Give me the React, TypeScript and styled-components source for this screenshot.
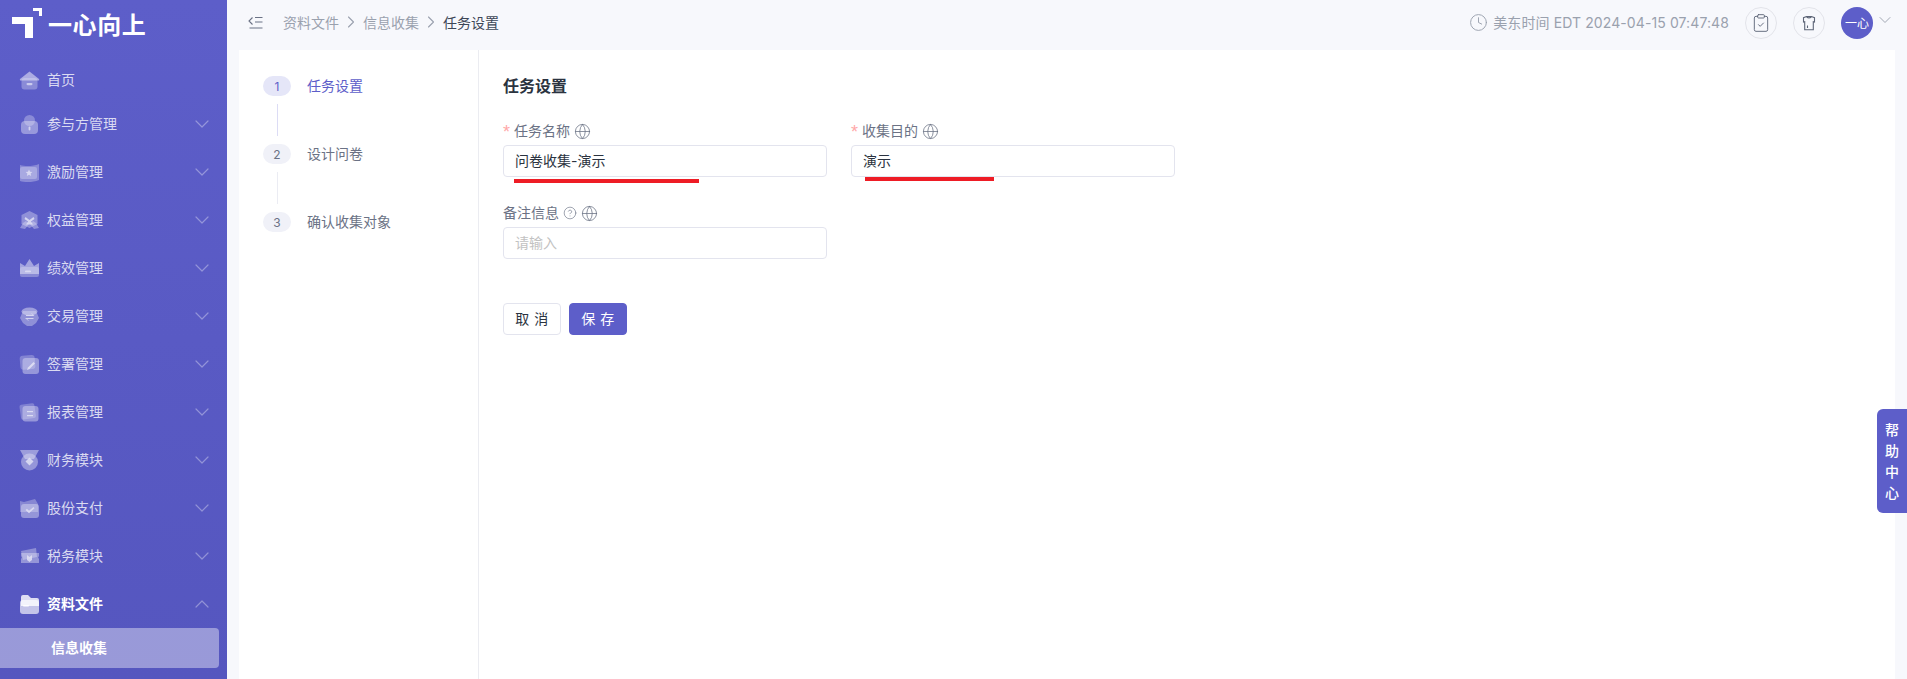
import React from "react";
import styled, { createGlobalStyle } from "styled-components";
import { ChevronDown, ChevronRight, ChevronUp, CircleHelp, ClipboardCheck, Clock, Globe } from "lucide-react";

const GlobalStyle = createGlobalStyle`
  html, body {
    margin: 0;
    height: 100%;
    overflow: hidden;
  }
  body {
    font-family: Inter, "Noto Sans CJK SC", sans-serif;
    font-size: 14px;
    color: #2b3340;
    background: #f7f8fc;
  }
  * {
    box-sizing: border-box;
  }
`;

const Page = styled.div`
  display: flex;
  width: 100%;
  height: 679px;
  overflow: hidden;
  position: relative;
`;

const Sidebar = styled.aside`
  flex: 0 0 227px;
  height: 100%;
  background: linear-gradient(180deg, #5d5ec9 0%, #5556bf 100%);
  color: #fff;
  overflow: hidden;
`;

const LogoRow = styled.div`
  display: flex;
  align-items: center;
  height: 46px;
  padding: 0 0 0 12px;
  gap: 6px;
`;

const LogoText = styled.span`
  font-size: 24px;
  line-height: 46px;
  font-weight: 700;
  letter-spacing: 0.6px;
  color: #fff;
  margin-top: 6px;
`;

const Menu = styled.nav`
  display: flex;
  flex-direction: column;
  gap: 8px;
  padding-top: 14px;
`;

const MenuRow = styled.div<{ $open?: boolean }>`
  display: flex;
  align-items: center;
  height: 40px;
  padding: 0 13px 0 19px;
  gap: 7px;
  color: ${(p) => (p.$open ? "#fff" : "rgba(255, 255, 255, 0.78)")};
  font-weight: ${(p) => (p.$open ? 600 : 400)};

  svg.arrow {
    margin-left: auto;
    color: rgba(255, 255, 255, 0.35);
  }
`;

const MenuFirst = styled(MenuRow)`
  margin-bottom: -4px;
`;

const MenuText = styled.span`
  margin-bottom: 2px;
`;

const SubRow = styled.div`
  display: flex;
  align-items: center;
  height: 40px;
  width: 219px;
  margin-top: -4px;
  padding: 0 0 2px 51px;
  border-radius: 0 4px 4px 0;
  background: rgba(255, 255, 255, 0.4);
  color: #fff;
  font-weight: 600;
`;

const Main = styled.div`
  flex: 1;
  min-width: 0;
  display: flex;
  flex-direction: column;
`;

const Header = styled.header`
  flex: 0 0 50px;
  display: flex;
  align-items: center;
  padding: 0 12px 5px 21px;
  background: #f7f8fc;
`;

const Crumbs = styled.div`
  display: flex;
  align-items: center;
  margin: 0 0 2px 19px;
  color: #9aa1ae;
`;

const CrumbSep = styled.span`
  display: flex;
  width: 24px;
  justify-content: center;
  color: #9aa1ae;
`;

const CrumbCurrent = styled.span`
  color: #3d4757;
`;

const HeaderRight = styled.div`
  margin-left: auto;
  display: flex;
  align-items: center;
  color: #9aa1ae;
`;

const TimeText = styled.span`
  margin: 0 16px 2px 5px;
  white-space: nowrap;
  font-size: 14px;
  letter-spacing: 0.1px;
`;

const RoundButton = styled.span`
  width: 32px;
  height: 32px;
  margin-right: 16px;
  display: flex;
  align-items: center;
  justify-content: center;
  border: 1px solid #e3e4ea;
  border-radius: 50%;
  color: #5d6577;
`;

const Avatar = styled.span`
  width: 32px;
  height: 32px;
  display: flex;
  align-items: center;
  justify-content: center;
  border-radius: 50%;
  background: #5d5ec9;
  color: #fff;
  font-size: 12px;
  white-space: nowrap;
`;

const AvatarArrow = styled(ChevronDown)`
  margin-left: 2px;
  margin-top: -6px;
  color: #a2a8b4;
`;

const Body = styled.div`
  flex: 1;
  display: flex;
  margin: 0 12px;
  background: #fff;
  min-height: 0;
`;

const Steps = styled.div`
  flex: 0 0 240px;
  padding: 26px 0 0 24px;
  border-right: 1px solid #ebecf1;
`;

const Step = styled.div`
  display: flex;
  align-items: center;
  height: 20px;
  gap: 16px;
`;

const StepNumber = styled.span<{ $active?: boolean }>`
  width: 28px;
  height: 20px;
  display: flex;
  align-items: center;
  justify-content: center;
  border-radius: 10px;
  font-size: 12px;
  background: ${(p) => (p.$active ? "#e5e6f8" : "#f0f1f8")};
  color: ${(p) => (p.$active ? "#5d5ec9" : "#6b7285")};
`;

const StepLabel = styled.span<{ $active?: boolean }>`
  margin-bottom: 2px;
  color: ${(p) => (p.$active ? "#5d5ec9" : "#6b7285")};
`;

const StepLine = styled.div<{ $active?: boolean }>`
  width: 1px;
  height: 32px;
  margin: 8px 0 8px 14px;
  background: ${(p) => (p.$active ? "#dcdcf5" : "#ebecf3")};
`;

const FormArea = styled.div`
  flex: 1;
  padding: 25px 24px 0 24px;
`;

const Title = styled.h2`
  margin: 0;
  font-size: 16px;
  line-height: 22px;
  font-weight: 600;
  color: #2b3340;
`;

const FormRow = styled.div`
  display: flex;
  gap: 24px;
  margin-top: 23px;
`;

const FormRowNext = styled(FormRow)`
  margin-top: 25px;
`;

const Field = styled.div`
  position: relative;
  width: 324px;
`;

const Label = styled.label`
  display: flex;
  align-items: center;
  height: 22px;
  margin-bottom: 3px;
  padding-bottom: 2px;
  color: #6b7285;
  gap: 4px;

  svg {
    flex: none;
    margin-top: 2px;
  }
`;

const Required = styled.span`
  color: #ffa8a8;
  font-size: 18px;
  line-height: 18px;
  width: 7px;
  padding-top: 3px;
  font-family: "Liberation Sans", sans-serif;
`;

const GlobeIcon = styled(Globe)`
  color: #6b7285;
`;

const TextInput = styled.input`
  display: block;
  width: 100%;
  height: 32px;
  padding: 0 11px 2px;
  border: 1px solid #e3e4ee;
  border-radius: 4px;
  outline: none;
  font: inherit;
  color: #2b3340;
  background: #fff;

  &::placeholder {
    color: #c2c2c2;
  }
`;

const Underline = styled.span<{ $left: number; $top: number; $width: number }>`
  position: absolute;
  left: ${(p) => p.$left}px;
  top: ${(p) => p.$top}px;
  width: ${(p) => p.$width}px;
  height: 4px;
  background: #ee1c25;
`;

const Actions = styled.div`
  display: flex;
  gap: 8px;
  margin-top: 44px;
`;

const Button = styled.button<{ $primary?: boolean }>`
  width: 58px;
  height: 32px;
  padding: 0 0 2px;
  border-radius: 4px;
  border: 1px solid ${(p) => (p.$primary ? "#5d5ec9" : "#e3e4ee")};
  background: ${(p) => (p.$primary ? "#5d5ec9" : "#fff")};
  color: ${(p) => (p.$primary ? "#fff" : "#2b3340")};
  font: inherit;
  letter-spacing: 0.5px;
`;

const HelpTab = styled.div`
  position: absolute;
  right: 0;
  top: 409px;
  width: 30px;
  height: 104px;
  display: flex;
  flex-direction: column;
  align-items: center;
  justify-content: center;
  gap: 3px;
  border-radius: 6px 0 0 6px;
  background: #5d5ec9;
  color: #fff;
  font-size: 14px;
  line-height: 18px;
  font-weight: 500;
`;

const GlassIcon = styled.svg<{ $active?: boolean }>`
  flex: none;
  width: 21px;
  height: 21px;
  filter: blur(0.4px);
  opacity: ${(p) => (p.$active ? 1 : 0.82)};
`;

const Logo = () => (
  <svg width="30" height="30" viewBox="0 0 30 30" fill="#fff">
    <path d="M0 9h21v21h-8V16H0z" />
    <path d="M21 0h9v8h-3V3h-6z" />
  </svg>
);

const Glass = ({ children, active }: { children: React.ReactNode; active?: boolean }) => (
  <GlassIcon viewBox="0 0 21 21" fill="#fff" $active={active}>
    {children}
  </GlassIcon>
);

const menuIcons: Record<string, React.ReactNode> = {
  home: (
    <>
      <path opacity=".6" d="M10.5 1.500 20 9c.4.8 0 1.500-.6 1.500H1.600C1 10.500.600 9.800 1 9z" />
      <rect opacity=".35" x="2.500" y="8" width="16" height="11.500" rx="3" />
      <rect opacity=".75" x="7.500" y="13" width="6" height="2.200" rx="1.100" />
    </>
  ),
  partner: (
    <>
      <circle opacity=".35" cx="10.500" cy="6.500" r="5.500" />
      <rect opacity=".45" x="2" y="7" width="17" height="13" rx="4" />
      <rect opacity=".8" x="9.600" y="12.500" width="1.800" height="4" rx=".9" />
    </>
  ),
  reward: (
    <>
      <path opacity=".35" d="M1 3c5 1.500 13 1.500 19-1v16c-6 2.500-14 2.500-19 1z" />
      <rect opacity=".35" x="1" y="5" width="17" height="12" rx="2" />
      <path opacity=".85" d="m10 7.500 1 2.300 2.400.2-1.800 1.600.6 2.400-2.200-1.300-2.200 1.300.6-2.400L6.600 10l2.400-.2z" />
    </>
  ),
  equity: (
    <>
      <path opacity=".4" d="m10.500 1 8 4v9l-8 4-8-4V5z" />
      <path opacity=".4" d="m4 13 3-2 3 3-4 5-5-1zM17 13l-3-2-3 3 4 5 5-1z" />
      <path opacity=".85" d="m6.500 7 4 3 4-3 1 2-3.500 2.500 2 3h-7l2-3L5.500 9z" />
    </>
  ),
  crown: (
    <>
      <path opacity=".55" d="M1 5l5 3 4.500-7L15 8l5-3v11H1z" />
      <rect opacity=".35" x="1" y="9" width="19" height="10" rx="2" />
      <rect opacity=".8" x="6" y="12.500" width="6" height="1.800" rx=".9" />
    </>
  ),
  trade: (
    <>
      <ellipse opacity=".5" cx="10.500" cy="5.500" rx="8" ry="4" />
      <path opacity=".4" d="M4 5h13l3 7-3 5-4 3H8l-4-3-3-5z" />
      <path opacity=".85" d="M7 9h7l-2-1.500h1L15.500 10H7zM6 12h8.500v1H8l2 1.500H9z" />
    </>
  ),
  sign: (
    <>
      <rect opacity=".3" x="1" y="1.500" width="15" height="14" rx="3" transform="rotate(-5 8 8)" />
      <rect opacity=".45" x="3.500" y="4" width="16.500" height="16" rx="3" />
      <path opacity=".9" d="m14.500 8 1.500 1.500-5.500 5.500-2.500 1 1-2.500z" />
    </>
  ),
  report: (
    <>
      <rect opacity=".3" x="1" y="2" width="15" height="15" rx="2" transform="rotate(-8 8 8)" />
      <rect opacity=".45" x="3.500" y="4" width="16" height="15.500" rx="3" />
      <rect opacity=".9" x="8" y="9" width="6" height="1.200" />
      <rect opacity=".9" x="8" y="13" width="6" height="1.200" />
    </>
  ),
  medal: (
    <>
      <path opacity=".5" d="M1 0h19l-5 9h-9z" />
      <circle opacity=".45" cx="10.500" cy="12" r="8.500" />
      <path opacity=".85" d="m10.500 7.500 4 4-4 4-4-4z" />
    </>
  ),
  stock: (
    <>
      <path opacity=".35" d="M1 3l4 1 11-3 3 5v8H1z" />
      <rect opacity=".45" x="2" y="6" width="18" height="14" rx="3" />
      <path opacity=".85" d="m6.500 12 1.500-1.200 2 2 4.500-3.800 1 1.200-5.500 5z" />
    </>
  ),
  tax: (
    <>
      <path opacity=".4" d="M2 5l15-3 1 9-14 3z" />
      <path opacity=".45" d="M2 7h18v3a2 2 0 0 0 0 3v4H2v-4a2 2 0 0 0 0-3z" />
      <path opacity=".85" d="M8 9l2.500 2L13 9v5l-2.500 2L8 14z" />
    </>
  ),
  folder: (
    <>
      <path opacity=".8" d="M2 3a2 2 0 0 1 2-2h5l3 3h6a2 2 0 0 1 2 2v6H2z" />
      <rect opacity=".65" x="1" y="6" width="19" height="14" rx="3" />
      <rect opacity=".95" x="4" y="11" width="6" height="1.500" rx=".7" />
    </>
  ),
};

const menu = [
  { name: "参与方管理", icon: "partner" },
  { name: "激励管理", icon: "reward" },
  { name: "权益管理", icon: "equity" },
  { name: "绩效管理", icon: "crown" },
  { name: "交易管理", icon: "trade" },
  { name: "签署管理", icon: "sign" },
  { name: "报表管理", icon: "report" },
  { name: "财务模块", icon: "medal" },
  { name: "股份支付", icon: "stock" },
  { name: "税务模块", icon: "tax" },
];

const CollapseIcon = () => (
  <svg width="16" height="14" viewBox="0 0 16 14" fill="none" stroke="#6b7285" strokeWidth="1.1">
    <path d="M4.500 1.500 1 5l3.500 3.500M7 1.500h7.500M7 6h7.500M1.500 12h13" />
  </svg>
);

const ShirtIcon = () => (
  <svg width="16" height="16" viewBox="0 0 16 16" fill="none" stroke="#5d6577" strokeWidth="1.1">
    <path d="M5.500 1.500h5l3 1.200V7l-1.200-.3v8H3.700V6.700L2.500 7V2.700zM5.500 1.500c.5 1.800 4.500 1.800 5 0" />
    <path d="M6.500 10.500v2.500" />
  </svg>
);

export default function App() {
  return (
    <Page>
      <GlobalStyle />
      <Sidebar>
        <LogoRow>
          <Logo />
          <LogoText>一心向上</LogoText>
        </LogoRow>
        <Menu>
          <MenuFirst>
            <Glass>{menuIcons.home}</Glass>
            <MenuText>首页</MenuText>
          </MenuFirst>
          {menu.map((item) => (
            <MenuRow key={item.name}>
              <Glass>{menuIcons[item.icon]}</Glass>
              <MenuText>{item.name}</MenuText>
              <ChevronDown className="arrow" size={24} strokeWidth={1.2} />
            </MenuRow>
          ))}
          <MenuRow $open>
            <Glass active>{menuIcons.folder}</Glass>
            <MenuText>资料文件</MenuText>
            <ChevronUp className="arrow" size={24} strokeWidth={1.2} />
          </MenuRow>
          <SubRow>信息收集</SubRow>
        </Menu>
      </Sidebar>
      <Main>
        <Header>
          <CollapseIcon />
          <Crumbs>
            资料文件
            <CrumbSep>
              <ChevronRight size={20} strokeWidth={1.3} />
            </CrumbSep>
            信息收集
            <CrumbSep>
              <ChevronRight size={20} strokeWidth={1.3} />
            </CrumbSep>
            <CrumbCurrent>任务设置</CrumbCurrent>
          </Crumbs>
          <HeaderRight>
            <Clock size={19} strokeWidth={1.2} />
            <TimeText>美东时间 EDT 2024-04-15 07:47:48</TimeText>
            <RoundButton>
              <ClipboardCheck size={20} strokeWidth={1.1} />
            </RoundButton>
            <RoundButton>
              <ShirtIcon />
            </RoundButton>
            <Avatar>一心</Avatar>
            <AvatarArrow size={20} strokeWidth={1.2} />
          </HeaderRight>
        </Header>
        <Body>
          <Steps>
            <Step>
              <StepNumber $active>1</StepNumber>
              <StepLabel $active>任务设置</StepLabel>
            </Step>
            <StepLine $active />
            <Step>
              <StepNumber>2</StepNumber>
              <StepLabel>设计问卷</StepLabel>
            </Step>
            <StepLine />
            <Step>
              <StepNumber>3</StepNumber>
              <StepLabel>确认收集对象</StepLabel>
            </Step>
          </Steps>
          <FormArea>
            <Title>任务设置</Title>
            <FormRow>
              <Field>
                <Label>
                  <Required>*</Required>
                  任务名称
                  <GlobeIcon size={17} strokeWidth={1.1} />
                </Label>
                <TextInput readOnly value="问卷收集-演示" />
                <Underline $left={11} $top={59} $width={185} />
              </Field>
              <Field>
                <Label>
                  <Required>*</Required>
                  收集目的
                  <GlobeIcon size={17} strokeWidth={1.1} />
                </Label>
                <TextInput readOnly value="演示" />
                <Underline $left={14} $top={57} $width={129} />
              </Field>
            </FormRow>
            <FormRowNext>
              <Field>
                <Label>
                  备注信息
                  <CircleHelp size={14} strokeWidth={1.1} />
                  <GlobeIcon size={17} strokeWidth={1.1} />
                </Label>
                <TextInput readOnly placeholder="请输入" />
              </Field>
            </FormRowNext>
            <Actions>
              <Button>取 消</Button>
              <Button $primary>保 存</Button>
            </Actions>
          </FormArea>
        </Body>
      </Main>
      <HelpTab>
        <span>帮</span>
        <span>助</span>
        <span>中</span>
        <span>心</span>
      </HelpTab>
    </Page>
  );
}
